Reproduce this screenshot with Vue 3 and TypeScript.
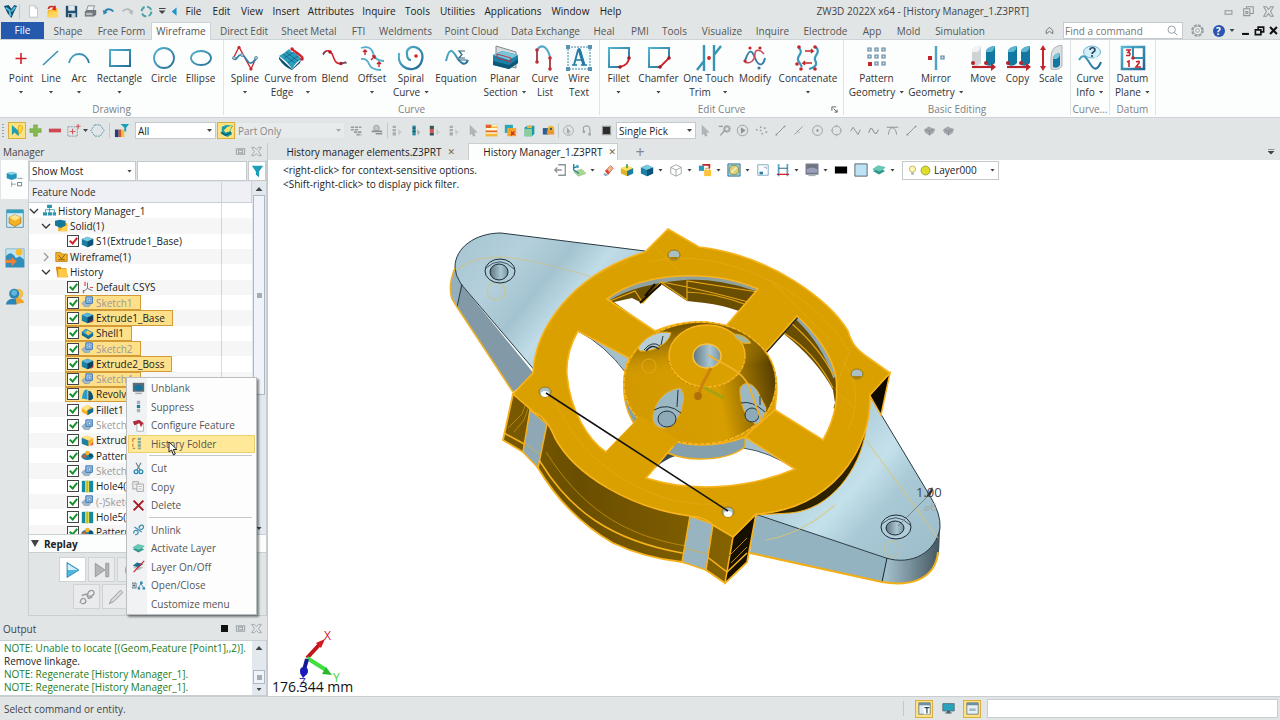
<script setup lang="ts">
import { ref } from 'vue'

interface Tool { icon: string; lines: string[]; w: number; arrow?: boolean; far?: boolean }
interface Group { name: string; w: number; launcher?: boolean; tools: Tool[] }
interface Node { text: string; icon: string; level: number; open?: boolean; fold?: boolean; check?: string; picked?: boolean; dim?: boolean }

const cubeArt = '<path d="M1 5 8 2l7 3v7l-7 3-7-3z" fill="#1b7fa6"/><path d="M1 5 8 2l7 3-7 3z" fill="#7cc8e0"/><path d="M8 8v7l7-3V5z" fill="#0c5579"/>'
const sketchArt = '<path d="M1 9 6 5l7 3-3 5-6 0z" fill="#9db8c9" stroke="#7d9bb0" stroke-width=".8"/><path d="M6 1h8v8H6z" fill="#9cc0e6" stroke="#3b76b5" stroke-width="1.2"/><path d="M9 4h3v3H9z" fill="#eef5fc" stroke="#3b76b5" stroke-width=".8"/>'
const layerArt = '<path d="m1 9 7-3 7 3-7 4z" fill="#2f9489"/><path d="m1 7 6-4 8 2-6 5z" fill="#66cbb7" stroke="#3aa596" stroke-width=".6"/>'
const bluCyl = (x: number, a: string, b: string) => `<path d="M${x} 7q0-5 9-6v17q-3 4-9 2z" fill="${a}"/><path d="M${x} 7q0-5 9-6-1 5-4 6z" fill="${b}"/>`

const art: Record<string, string> = {
  cube: cubeArt,
  sketch: sketchArt,
  layer: layerArt,
  logo: '<path d="M1 2 6 1l3 4 3-4 3 1-3 6-3 7-4-5z" fill="#174a6d"/><path d="m3 4 4 3 1 6M13 3l-4 5" stroke="#4fc2de" stroke-width="2" fill="none"/>',
  page: '<path d="M3 1h7l3 3v11H3z" fill="#fff" stroke="#b4bcc0"/><path d="M10 1v3h3" fill="#dde3e6" stroke="#b4bcc0"/>',
  open: '<path d="M2 6h5l1-2h6v11H2z" fill="#ffb62e"/><path d="M4 8h12l-3 7H2z" fill="#ffd65c"/><path d="M3 5c0-4 6-4 8-1V1M11 5H8" stroke="#d3261b" stroke-width="2" fill="none"/>',
  save: '<path d="M1 1h14v14H1z" fill="#24506e"/><path d="M4 1h8v6H4z" fill="#dfe9ee"/><path d="M4 10h9v5H4z" fill="#bfd3dc"/><path d="M5 11h3v4H5z" fill="#17394f"/>',
  print: '<path d="m5 1 8 0-2 6H3z" fill="#eceff1" stroke="#7a8286"/><path d="m1 8 3-2h11v6l-3 2H1z" fill="#6c767b"/><path d="M2 9h9v4H2z" fill="#b6bdc0" stroke="#777"/>',
  undo: '<path d="M3 9c2-5 8-5 11-1" stroke="#2c85b3" stroke-width="2.4" fill="none"/><path d="m1 6 1 6 5-3z" fill="#2c85b3"/>',
  redo: '<path d="M13 9C11 4 5 4 2 8" stroke="#b2babd" stroke-width="2.2" fill="none"/><path d="m15 6-1 6-5-3z" fill="#b2babd"/>',
  cycle: '<circle cx="8" cy="8" r="6" fill="none" stroke="#4fa3a9" stroke-width="2.4" stroke-dasharray="6.4 3"/>',
  left: '<path d="M11 2v12L4 8z" fill="#1f93cc"/>',
  gear: '<circle cx="8" cy="8" r="5.5" fill="none" stroke="#989fa3" stroke-width="2.4" stroke-dasharray="3 1.3"/><circle cx="8" cy="8" r="4.5" fill="#eef0f1" stroke="#989fa3"/><circle cx="8" cy="8" r="2" fill="none" stroke="#989fa3"/>',
  search: '<circle cx="7" cy="7" r="4.5" fill="none" stroke="#8c9499" stroke-width="1.1"/><path d="m10 10 4 4" stroke="#8c9499" stroke-width="1.2"/>',
  up: '<path d="M4 12V8l4-4 4 4v4l-4-3z" fill="none" stroke="#6b7377" stroke-width="1.2"/>',
  // ribbon
  point: '<path d="M13 8v11M7.500 13.500h11" stroke="#cf2027" stroke-width="1.6"/>',
  line: '<path d="M5 20 20 6" stroke="url(#teal)" stroke-width="1.6"/>',
  arc: '<path d="M3 18C6 6 20 6 23 18" stroke="url(#teal)" stroke-width="1.8" fill="none"/>',
  rectangle: '<path d="M3 5h20v16H3z" fill="none" stroke="url(#teal)" stroke-width="2"/>',
  circle: '<circle cx="13" cy="13" r="10" fill="none" stroke="url(#teal)" stroke-width="1.800"/>',
  ellipse: '<ellipse cx="13" cy="13" rx="10" ry="7" fill="none" stroke="url(#teal)" stroke-width="1.800"/>',
  spline: '<path d="M1 14 7 2l12 22 5-11" fill="none" stroke="#d2232a" stroke-width="1.3"/><path d="M1 13c4 5 4-5 9-3s5 9 9 8 3-3 6-6" fill="none" stroke="#2a7fa8" stroke-width="1.8"/><g fill="#c3252b"><circle cx="7" cy="2.500" r="1.600"/><circle cx="19" cy="24" r="1.600"/></g><g fill="#9fc4d6" stroke="#4d7f99" stroke-width=".6"><circle cx="2" cy="13" r="1.600"/><circle cx="10" cy="10" r="1.600"/><circle cx="24" cy="13" r="1.600"/></g>',
  curveedge: '<path d="m1 12 13 12 9-9-1 3-8 7Q6 22 1 14z" fill="#0d4f70"/><path d="M1 11Q7 8 11 4l3 3q4 0 10 8-5 0-10 9-4-7-13-13z" fill="#2b9cbd"/><path d="m5 9 12 9M8 7l12 9M6 13 16 7M10 18l10-7" stroke="#0d5b7d" stroke-width=".7"/><path d="M14 4c3 3 6 4 11 9" stroke="#d2232a" stroke-width="2.400" fill="none"/><circle cx="14" cy="4" r="1.700" fill="#d2232a"/><circle cx="24" cy="14" r="1.800" fill="#d2232a"/>',
  blend: '<path d="M1 9C4 4 9 5 11 11s4 10 13 6" fill="none" stroke="#d2232a" stroke-width="1.600"/><circle cx="8" cy="7" r="1.700" fill="#a51d24"/><circle cx="19" cy="18.500" r="1.700" fill="#a51d24"/><path d="M1 10 4 6M19 18h6" stroke="#3e5f77" stroke-width="1.200"/>',
  offset: '<path d="M2 3q10-3 12 5t11 8M2 14q6-1 8 5t12 6" fill="none" stroke="#54aecb" stroke-width="1.800"/><path d="M6 10V5M4 7l2-2 2 2M20 22v-5m-2 2 2-2 2 2M12 15l4-4m-3 0h3v3" stroke="#c3252b" stroke-width="1.400" fill="none"/>',
  spiral: '<path d="M1 8C-1 20 8 25 15 24c10-2 12-15 6-20-7-5-13 0-12 5 0 5 2 6 4 6" fill="none" stroke="url(#teal)" stroke-width="2.200"/><circle cx="18" cy="11" r="1.800" fill="#d2232a"/>',
  equation: '<path d="M3 16C6 3 9 4 13 11s9 11 12 4" fill="none" stroke="url(#teal)" stroke-width="2"/><path d="M22 6h-6l3 3.500-3 3.500h6m-7 2h9" stroke="#31667f" fill="none" stroke-width="1.200"/>',
  planar: '<path d="m4 1 20 6v16L4 18z" fill="#d6dbde" stroke="#7f8990"/><path d="m1 10 9-4 16 4v8l-9 6-16-4z" fill="#1982a8"/><path d="m1 10 9-4 16 4-9 5z" fill="#7ac4da"/><path d="m1 16 16 4 9-6v4l-9 6-16-4z" fill="#0d5877"/><path d="m5 9 14 4v4L5 13z" fill="none" stroke="#b63549"/>',
  curvelist: '<path d="M5 16V5C9-1 15 0 18 12v12" fill="none" stroke="#54a9cb" stroke-width="2"/><path d="M5 6v11M18 13v11" stroke="#c52b33" stroke-width="1.500"/><g fill="#c52b33"><circle cx="5" cy="5" r="1.800"/><circle cx="5" cy="17" r="1.800"/><circle cx="18" cy="13" r="1.800"/><circle cx="18" cy="24" r="1.800"/></g>',
  wiretext: '<path d="M2 2h22v22H2z" fill="#f3fafd" stroke="#4b87a4" stroke-dasharray="2 1"/><path d="m12 5-4 15m4-15 1-1 1 1 4 15" stroke="#2578a2" stroke-width="1.800" fill="none"/><path d="m13 4 5 16" stroke="#2578a2" stroke-width="3"/><path d="M9 15h7M6 20h5m4 0h6" stroke="#2578a2" stroke-width="1.500" fill="none"/><g fill="#5793b0"><path d="M0 0h4v4H0zM22 0h4v4h-4zM0 22h4v4H0zM22 22h4v4h-4z"/></g>',
  fillet: '<path d="M23 12V3H3v19h10" fill="none" stroke="url(#teal)" stroke-width="2"/><path d="M23 12q0 8-9 10" stroke="#d2232a" stroke-width="1.800" fill="none"/><circle cx="23" cy="13" r="1.800" fill="#a51d24"/><circle cx="14" cy="22" r="1.800" fill="#a51d24"/>',
  chamfer: '<path d="M23 12V3H3v19h10" fill="none" stroke="url(#teal)" stroke-width="2"/><path d="m23 13-9 9" stroke="#d2232a" stroke-width="1.800" fill="none"/><circle cx="23" cy="13" r="1.800" fill="#a51d24"/><circle cx="14" cy="22" r="1.800" fill="#a51d24"/>',
  trim: '<path d="M8 0v26M18 0v26M1 25l7-9M25 1l-7 9" stroke="#3794b7" stroke-width="2.400"/><circle cx="13" cy="13" r="1.900" fill="#d2232a"/>',
  modify: '<path d="M3 16C7 3 10 5 13 13s8 9 10 0" fill="none" stroke="#347fa8" stroke-width="2"/><path d="M3 17c6 3 10-3 10-8s5-5 9 0" fill="none" stroke="#c74c57" stroke-width="1.500"/><g fill="#c3252b"><circle cx="8" cy="3" r="1.600"/><circle cx="18" cy="3" r="1.600"/><circle cx="3" cy="16" r="1.600"/></g><circle cx="17" cy="23" r="1.600" fill="#347fa8"/>',
  concat: '<path d="M3 2c8 7-4 9 1 15l3 5M21 2c6 7-5 9 0 15 1 4-3 6-7 7" fill="none" stroke="#3c98bb" stroke-width="2.200"/><path d="M10 6h8l-2-2m2 2-2 2M17 18H8l2-2m-2 2 2 2" fill="none" stroke="#c3252b" stroke-width="1.400"/><g fill="#c3252b"><circle cx="4" cy="2" r="1.800"/><circle cx="20" cy="2" r="1.800"/><circle cx="2" cy="19" r="1.800"/><circle cx="6" cy="24" r="1.800"/><circle cx="20" cy="24" r="1.800"/></g>',
  pattern: '<g fill="#d9e7ee" stroke="#5f87a0" stroke-width="1.200"><path d="M4 3h3v3H4zM11 3h3v3h-3zM18 3h3v3h-3zM4 10h3v3H4zM11 10h3v3h-3zM18 10h3v3h-3zM11 17h3v3h-3zM18 17h3v3h-3z"/></g><path d="M4 17h4v4H4z" fill="#c3252b"/>',
  mirror: '<path d="M13 1v24" stroke="#4ea4c4" stroke-width="2.400"/><path d="M5 11h4v4H5z" fill="#c3252b"/><path d="M18 11h3v3h-3z" fill="#d9e7ee" stroke="#5f87a0" stroke-width="1.200"/>',
  move: bluCyl(2, '#cfd3d6', '#f1f2f3') + bluCyl(16, '#1278a1', '#5fb6d0') + '<path d="M2 22h22" stroke="#b8242b" stroke-width="2.200"/><path d="m21 18 5 4-5 4z" fill="#b8242b"/><circle cx="3" cy="18" r="2" fill="#b8242b"/><circle cx="16" cy="18" r="2" fill="#b8242b"/>',
  copy3d: bluCyl(3, '#1278a1', '#5fb6d0') + bluCyl(16, '#1278a1', '#5fb6d0') + '<path d="M2 22h22" stroke="#b8242b" stroke-width="2.200"/><path d="m21 18 5 4-5 4z" fill="#b8242b"/><circle cx="3" cy="18" r="2" fill="#b8242b"/><circle cx="16" cy="18" r="2" fill="#b8242b"/>',
  scale: '<path d="M5 3v20" stroke="#c3252b" stroke-width="2"/><path d="m5 0 3 5H2zM5 26l3-5H2z" fill="#c3252b"/><path d="M13 12Q13 1 24 0v21q-3 5-11 3z" fill="#dce0e2" stroke="#aeb4b8"/><path d="M15 14q0-5 7-6v12q-2 4-7 2z" fill="#1278a1"/><path d="M15 14q0-5 7-6 0 5-4 6z" fill="#7cc6da"/>',
  info: '<ellipse cx="15" cy="7" rx="8.500" ry="6" fill="#d5effa" stroke="#6bb3d2"/><path d="m17 12 4 4-1-5" fill="#d5effa"/><path d="M2 15c4-7 7-3 10 2s7 12 12 0" fill="none" stroke="url(#teal)" stroke-width="2"/><path d="M13 5c0-3 5-3 5 0 0 2-3 2-3 4m0 1v2" stroke="#24465f" stroke-width="1.600" fill="none"/>',
  datum: '<path d="M2 2h22v22H2z" fill="#fff" stroke="url(#teal)" stroke-width="2.600"/><path d="M13 2v11h11" fill="none" stroke="#2f8fb5" stroke-width="2"/><path d="m6 5 4 0-2 2.500q3 0 1.500 3H6M7 17l2-1v6M16 17q4-2 3 1l-3 4h5" fill="none" stroke="#c3252b" stroke-width="1.600"/><circle cx="13" cy="13" r="1.800" fill="#c3252b"/>',
  // selection bar
  pick: '<path d="M2 2v11l3-3 4 4 1-5z" fill="#1f9fb5"/><path d="M9 3c4-2 5 2 4 4l-2 4H9z" fill="#ffd83b" stroke="#cc9a12" stroke-width=".7"/>',
  plus: '<path d="M6 2h4v4h4v4h-4v4H6v-4H2V6h4z" fill="#86b94f" stroke="#6d9f3c" stroke-width=".6"/>',
  minus: '<path d="M2 6h13v4H2z" fill="#cf4a50"/>',
  boxpick: '<path d="M2 4h10v10H2z" fill="none" stroke="#7f97a1" stroke-dasharray="2 1"/><path d="M7 6v6M4 9h6M13 1v5M10.500 3.500h5" stroke="#cf5a60" stroke-width="1.200"/>',
  hex: '<path d="m5 2h6l4 6-4 6H5L1 8z" fill="none" stroke="#4c8fa3" stroke-dasharray="2 1"/>',
  filterset: '<path d="M1 7h4v8H1z" fill="#233f7a"/><path d="M5 7h3v8H5z" fill="#df4b35"/><path d="M8 7h3v8H8z" fill="#efc23d"/><path d="M7 1h9l-3 4v4h-2V5z" fill="#1aa0b7"/>',
  part: '<path d="m3 4 5-2 7 1-3 5 2 4-5 3-6-3z" fill="#169db2"/><path d="m5 8 4-4 5-1-3 6-4 1z" fill="#ffe15c"/><path d="m2 10 5 3 6-3" stroke="#0a6372" stroke-width="1.500" fill="none"/>',
  gline1: '<path d="M1 4h13M1 7h9M5 10h9M8 13h6" stroke="#959b9f" stroke-width="2" stroke-dasharray="4 1"/>',
  gline2: '<circle cx="8" cy="5" r="3.500" fill="#c2c6c8" stroke="#92989b"/><path d="M2 9h13M7 12h8" stroke="#8c9296" stroke-width="2"/>',
  list1: '<path d="M2 2h4v3H2zM2 6h4v3H2zM2 10h4v4H2z" fill="#a5abae"/><path d="m9 6 5 5-3 0v3l-2-2z" fill="#c6cacc"/>',
  list2: '<path d="M3 2h4v12H3z" fill="#218a9c"/><path d="M3 5h4M3 9h4" stroke="#27414d"/><path d="m9 6 4 5-2 0v3l-2-2z" fill="#aab0b3"/>',
  list3: '<path d="M1 2h5v4H1zM1 11h5v3H1z" fill="#35545f"/><path d="M1 6h5v5H1z" fill="#cf5450"/><path d="m9 6 5 5-3 0v3l-2-2z" fill="#c6cacc"/>',
  ptr: '<path d="m4 2 8 8H8l2 4-2 1-2-4-2 2z" fill="#b3b8bb" stroke="#8b9194" stroke-width=".6"/>',
  rows: '<path d="M1 1h14v14H1z" fill="#fff8d4" stroke="#d8c78c" stroke-width=".6"/><path d="M1 1h7v4H1zM1 8h14v2H1z" fill="#e2622a"/><path d="M8 3h7v2H8zM1 12h14v3H1z" fill="#f2b83a"/>',
  fold1: '<path d="M1 1h10v10H1z" fill="#2aa7b9"/><path d="M4 5h11v10H4z" fill="#f9a52c"/><path d="m8 7 2 3 4-2-2 3 2 3-3-1-3 2 1-4z" fill="#c9302a"/>',
  fold2: '<path d="m2 4 4-2h8v10l-3 3H2z" fill="#1c9aac"/><path d="M2 6h9v9H2z" fill="#8dcf9b"/><path d="M5 2h6v3H5z" fill="#f0b43c"/>',
  fold3: '<path d="M1 5h7v8H1z" fill="#2a5f93"/><circle cx="11" cy="6" r="4" fill="#f3b532"/><path d="M6 8h9v5H6z" fill="#ef9430"/><circle cx="11" cy="6" r="1.500" fill="#3d5670"/>',
  gcirc: '<circle cx="8" cy="8" r="6" fill="none" stroke="#9aa0a3"/><path d="m6 4 5 6H8l1 3-3-2z" fill="#a3a8ab"/>',
  gcurve: '<path d="M3 9V4c3-3 8-2 8 3v7" fill="none" stroke="#9aa0a3" stroke-width="1.300"/><path d="M2 8h3v3H2zM9 11h3v3H9z" fill="#a3a8ab"/>',
  square: '<path d="M3 3h10v10H3z" fill="#2b2b2b" stroke="#9a9a9a" stroke-width="1.500"/>',
  ggear: '<circle cx="11" cy="6" r="4" fill="#b5babd" stroke="#92989b"/><circle cx="11" cy="6" r="1.500" fill="#e1e5e6"/><path d="M1 3h5M3 14l5-6" stroke="#92989b" stroke-width="1.500"/>',
  gplay: '<circle cx="8" cy="8" r="6.500" fill="none" stroke="#8d9396"/><path d="m6 4 6 4-6 4z" fill="#8d9396"/>',
  gdots: '<g fill="#9aa0a3"><path d="M1 6h2v2H1zM6 3h2v2H6zM6 7h2v2H6zM11 4h2v2h-2zM8 11h2v2H8zM13 9h2v2h-2z"/></g>',
  gslash: '<path d="M3 13 13 3" stroke="#8d9396" stroke-width="1.200"/><path d="M2 12h2v2H2zM12 2h2v2h-2z" fill="#8d9396"/>',
  gslash2: '<path d="M3 13 13 3M6 8l3 3" stroke="#9aa0a3" stroke-width="1.200"/>',
  gdot: '<circle cx="8" cy="8" r="6" fill="none" stroke="#8d9396"/><circle cx="8" cy="8" r="1.500" fill="#8d9396"/>',
  gring: '<circle cx="8" cy="8" r="5.500" fill="none" stroke="#8d9396"/><path d="M7 1h2v3H7zM7 12h2v3H7zM1 7h3v2H1zM12 7h3v2h-3z" fill="#b5babd"/>',
  gzig: '<path d="M2 9 5 4l6 9 3-6" fill="none" stroke="#8d9396" stroke-width="1.200"/>',
  gwave: '<path d="M2 11c3-9 4-6 6-2s4 4 6-2" fill="none" stroke="#8d9396" stroke-width="1.300"/>',
  garch: '<path d="M1 4h14M3 13c1-11 9-11 10 0" fill="none" stroke="#8d9396" stroke-width="1.200"/>',
  gcube: '<path d="m1 7 6-4 4 2 4 1-2 5-5 3-5-3z" fill="#a1a7aa"/><path d="m3 7 5 2 5-2M8 9v5" stroke="#868c8f" fill="none"/>',
  // side strip
  sideTree: '<path d="M2 4l6-2 6 2v6l-6 2-6-2z" fill="#2495bb"/><path d="M2 4l6-2 6 2-6 2z" fill="#8dd2e6"/><path d="M8 14v6m0-3h5M15 10h6" stroke="#858e93" fill="none"/><path d="M15 15h5v4h-5z" fill="none" stroke="#5c6f7b"/>',
  sideBox: '<path d="M2 1h20v21H2z" fill="#d3eaf3" stroke="#4f8aa6"/><path d="M2 1h20v4H2z" fill="#35a0c0"/><path d="m5 10 7-3 7 3v7l-7 4-7-4z" fill="#f4b223" stroke="#a0690e" stroke-width=".8"/><path d="m5 10 7 4 7-4-7-3z" fill="#ffe28a"/>',
  sideView: '<path d="M1 1h22v22H1z" fill="#bfe3f1" stroke="#7fb2c8"/><path d="M1 10q6-8 12 2l5-2 5 4v9H1z" fill="#318ebb"/><circle cx="17" cy="5" r="4" fill="#fbbc29"/><path d="M1 14h7v-3l6 5-6 6v-4H1z" fill="#ee8038"/>',
  sideUser: '<circle cx="16" cy="8" r="6" fill="#f5bd4c"/><path d="M10 21q-1-7 5-8 7 1 8 6z" fill="#f3a42c"/><circle cx="11" cy="8" r="6" fill="#2e86b5"/><circle cx="11" cy="7" r="3.500" fill="#5fb6da"/><path d="M1 21q1-6 7-7h5l1 7z" fill="#2e86b5"/>',
  funnel: '<path d="M1 1h14l-5 7v7l-4-3V8z" fill="#1c9ebb"/>',
  // tree
  hierarchy: '<path d="M5 1h6v4H5zM0 10h5v4H0zM6 10h5v4H6zM12 10h4v4h-4z" fill="#2a94b0"/><path d="M8 5v5M3 10V7h11v3" stroke="#2a94b0" fill="none"/>',
  folderSolid: '<path d="M4 5h11v10H4z" fill="#f4a91f"/><path d="M0 2l6-1 7 1v6l-6 3-7-3z" fill="#13789a"/><path d="m10 10 6-3-2 8H5z" fill="#ffd35a"/>',
  folderWire: '<path d="M1 3h6l1 2h7v9H1z" fill="#f4b223" stroke="#b97b10"/><path d="m4 6 4 5 4-5M4 12h8" stroke="#8a5a1a" fill="none" stroke-width="1.200"/>',
  folder: '<path d="M1 2h6l1 2h6v4l2 7H3z" fill="#e08a16"/><path d="M4 5h11v10H4z" fill="#ffcb45"/>',
  csys: '<path d="M8 2v7l6 3M8 9l-5 4" stroke="#68747a" stroke-width="1.200" fill="none"/><path d="M5 1v5M11 8h4M3 11v4" stroke="#d65058" stroke-width="1.500"/>',
  extrude: '<path d="M1 5 8 2l7 3v7l-7 3-7-3z" fill="#1b7fa6"/><path d="M1 5 8 2l7 3-7 3z" fill="#5cb4d6"/><path d="M8 8v7l7-3V5z" fill="#123f5c"/><path d="m11 15 4-2v-3" fill="#d5343a"/>',
  shell: '<path d="m1 6 5-4 9 5v4l-6 4-8-5z" fill="#166d92"/><path d="m1 6 5-4 9 5-6 4z" fill="#3fa4c6"/><path d="m5 7 3-3 5 3-4 3z" fill="#f0c24a"/>',
  revolve: '<path d="M1 13q1-8 4-11h3v12z" fill="#2b9cc4"/><path d="M9 15V3q6 2 6 10l-3 2z" fill="#0d4f78"/>',
  filletT: '<path d="M1 6 8 2l7 4v5l-7 4-7-4z" fill="#f4b223"/><path d="m1 6 7-4 4 2-5 6z" fill="#ffe48c"/><path d="M8 9v6l7-4V6z" fill="#176b91"/>',
  extrudeY: '<path d="M1 4 8 2l7 3v7l-6 3-8-3z" fill="#f2b530"/><path d="m1 4 7-2 7 3-6 3z" fill="#ffe28a"/><path d="M1 5v7l8 3V8z" fill="#1b7fa6"/><path d="m11 15 4-2v-3z" fill="#d5343a"/>',
  patternT: '<ellipse cx="8" cy="9" rx="7.500" ry="4.500" fill="#1b7fa6"/><circle cx="8" cy="5" r="3" fill="#f2b530"/><circle cx="4" cy="9" r="2.500" fill="#c1622f"/><circle cx="12" cy="8" r="2.500" fill="#0e4f6e"/>',
  hole: '<path d="M1 1h14v14H1z" fill="#158ba0"/><path d="M5 1h5v14H5z" fill="#e7d94b"/><path d="M7 1h1v14H7z" fill="#7b9a48"/>',
  // context menu
  unblank: '<path d="M1 1h14v11H1z" fill="#5d6b75"/><path d="m3 5 5-2 5 2v4l-5 2-5-2z" fill="#15759f"/><path d="M4 13h8v2H4z" fill="#a8b0b5"/>',
  suppress: '<path d="M6 1h4v4H6zM6 11h4v4H6z" fill="#9fb3bd"/><path d="M6 6h4v4H6z" fill="#1e7f98"/>',
  configure: '<path d="M6 5h8v10H6z" fill="#fff" stroke="#9aa"/><path d="M1 3 9 1l5 4-3 5-2-5-6 3z" fill="#b02a3c"/>',
  histFolder: '<path d="M1 2h3M1 2v12h3" stroke="#d47f3c" fill="none" stroke-width="1.500" stroke-dasharray="4 2"/><path d="M7 1h4v3H7zM7 5h4v3H7zM7 9h4v3H7zM7 13h4v2H7z" fill="#83a79c"/>',
  cut: '<path d="m5 1 5 9M11 1 6 10" stroke="#6c8796" stroke-width="1.500"/><circle cx="5" cy="12" r="2.300" fill="none" stroke="#1f88b5" stroke-width="1.600"/><circle cx="11" cy="12" r="2.300" fill="none" stroke="#1f88b5" stroke-width="1.600"/>',
  copy: '<path d="M1 2h7v9H1z" fill="#eee" stroke="#999"/><path d="M6 5h8v9H6z" fill="#f6f6f6" stroke="#999"/><path d="M8 8h4M8 11h4M3 5h3" stroke="#aaa"/>',
  del: '<path d="m2 2 12 12M14 2 2 14" stroke="#a61b25" stroke-width="2.400"/>',
  unlink: '<path d="M2 13c0-4 3-5 5-3s-1 5-3 4M9 7c-1-4 4-6 5-3s-3 5-4 3M3 5l9 6" fill="none" stroke="#3a8cb0" stroke-width="1.500"/>',
  layerOff: '<path d="m1 9 6-2 7 2-6 4z" fill="#b8c4ca"/><path d="m1 7 5-4 8 2-6 4z" fill="#1a6f93"/><path d="M2 15 15 1" stroke="#d2232a" stroke-width="1.500"/>',
  openClose: '<path d="M0 5h5v6H0z" fill="#fff" stroke="#456"/><path d="M1 8h3M2.500 6v4" stroke="#456"/><path d="M10 3h3v3h-3zM7 10h3v3H7zM13 10h3v3h-3z" fill="#238aaa"/><path d="m8 10 3-4 3 4" stroke="#238aaa" fill="none"/>',
  // replay
  play: '<path d="m4 2 16 10L4 22z" fill="#4cb8df" stroke="#1e7aa6"/><path d="m5 4 13 8H5z" fill="#d2eefa"/>',
  next: '<path d="m3 3 13 9-13 9z" fill="#b3b6b8" stroke="#8a8e90"/><path d="M17 3h4v18h-4z" fill="#b3b6b8" stroke="#8a8e90"/>',
  loop: '<path d="M18 6A8 8 0 1 0 18 18" fill="none" stroke="#a6aaac" stroke-width="2"/>',
  chain: '<path d="M3 20c0-6 5-8 7-4s-3 6-6 4M13 10c-1-6 6-9 8-5s-5 8-7 5M5 10l6-2 3 6 5-2" fill="none" stroke="#999da0" stroke-width="1.800"/>',
  pencil: '<path d="m3 21 3-6L18 3l3 3L9 18z" fill="#d7dadb" stroke="#95999b" stroke-width="1.300"/>',
  // viewport bar
  exit: '<path d="M6 2h8v12H6" fill="none" stroke="#8d9396" stroke-width="1.500"/><path d="M10 8H2m3-3L2 8l3 3" fill="none" stroke="#8d9396" stroke-width="1.500"/>',
  plane: '<path d="m2 10 9-3 5 5-9 3z" fill="#a8d98f" stroke="#7bb56f" stroke-width=".6"/><path d="M2 1v7l6 4M1 5h6" stroke="#2f7fa2" stroke-width="1.600" fill="none"/><circle cx="6" cy="4" r="2" fill="#58a7c6"/>',
  eraser: '<path d="m4 11 4 3-3 1-2-2z" fill="#8aa7c4"/><path d="m5 9 6-6 3 3-6 7z" fill="#f1b88c" stroke="#cc6a4c"/><path d="m5 9 2-2 3 4-2 2z" fill="#d5403a"/>',
  yellowbox: '<path d="m1 6 7-3 7 3v6l-7 3-7-3z" fill="#e0b52c"/><path d="m1 6 7-3 7 3-7 3z" fill="#ffe35b"/><path d="M8 9v6l7-3V6z" fill="#1c7fa8"/><path d="M8 1v5" stroke="#2b8b48" stroke-width="1.600"/>',
  wirebox: '<path d="m2 5 6-3 6 3v7l-6 3-6-3zm0 0 6 3 6-3M8 8v7" fill="none" stroke="#9aa1a5"/>',
  lockbox: '<path d="M1 3h6v6H1z" fill="#2a9cba"/><path d="M5 2h8v4" stroke="#c3252b" stroke-width="2" fill="none"/><path d="M7 8h8v7H7z" fill="#ffc33c"/><path d="M9 8V6h4v2" stroke="#c98e17" fill="none"/>',
  target: '<path d="M1 1h14v14H1z" fill="#8fcbe2" stroke="#39718c"/><circle cx="8" cy="8" r="5.500" fill="#d9cf7c" stroke="#8f8a3b"/><path d="m5 11 6-6" stroke="#f4f0b8" stroke-width="2"/>',
  frame: '<path d="M2 2h12v12H2z" fill="#f7fbfd" stroke="#7ba7bb"/><path d="M4 10h4v3H4z" fill="#2e7aa2"/><path d="M9 5h3v2" stroke="#aac" fill="none"/>',
  section: '<path d="M3 1v14M13 1v14" stroke="#54a9cb" stroke-width="2"/><path d="M3 6h10" stroke="#27506b"/><path d="M1 13h14" stroke="#d2232a" stroke-width="1.500"/>',
  display: '<path d="M1 1h14v12H1z" fill="#6d7482" stroke="#8f969b"/><path d="M2 7q6-4 12 0v4H2z" fill="#9b9fbb"/><path d="M4 13h8v2H4z" fill="#a9afb3"/>',
  black: '<path d="M1 4h14v8H1z" fill="#000"/>',
  blue: '<path d="M1 1h14v14H1z" fill="#bde2f4" stroke="#4b5a62"/>',
  bulb: '<circle cx="8" cy="6" r="4.500" fill="#fff7b0" stroke="#a8a04a"/><path d="M6 11h4v3H6z" fill="#a6acb0"/>',
  dotY: '<circle cx="8" cy="8" r="6.500" fill="#e0dc2b" stroke="#7e8d1d"/>',
  statT: '<path d="M1 1h14v14H1z" fill="#dfe9f0" stroke="#61747f"/><path d="M1 1h14v3H1z" fill="#6d8fa6"/><path d="M7 5h7v10H7z" fill="#fff"/><path d="M8 7h6m-3 0v7" stroke="#2b4657" stroke-width="1.500"/>',
  statScreen: '<path d="M1 2h14v9H1z" fill="#2ba3bd" stroke="#4c6670"/><path d="M6 11h4v2H6zM4 13h8v1H4z" fill="#44606b"/>',
  statList: '<path d="M1 1h14v14H1z" fill="#e6eff5" stroke="#61747f"/><path d="M1 1h14v3H1z" fill="#6d8fa6"/><path d="M4 8h8v3H4z" fill="#9fb4c4"/>'
}

const menus = [
  { t: 'File', w: 27 }, { t: 'Edit', w: 29 }, { t: 'View', w: 32 }, { t: 'Insert', w: 36 }, { t: 'Attributes', w: 54 },
  { t: 'Inquire', w: 42 }, { t: 'Tools', w: 35 }, { t: 'Utilities', w: 45 }, { t: 'Applications', w: 66 }, { t: 'Window', w: 49 }, { t: 'Help', w: 31 }
]
const tabs = [
  { t: 'File', w: 43 }, { t: 'Shape', w: 48 }, { t: 'Free Form', w: 59 }, { t: 'Wireframe', w: 60 }, { t: 'Direct Edit', w: 66 },
  { t: 'Sheet Metal', w: 64 }, { t: 'FTI', w: 35 }, { t: 'Weldments', w: 59 }, { t: 'Point Cloud', w: 73 }, { t: 'Data Exchange', w: 75 },
  { t: 'Heal', w: 42 }, { t: 'PMI', w: 30 }, { t: 'Tools', w: 39 }, { t: 'Visualize', w: 56 }, { t: 'Inquire', w: 45 },
  { t: 'Electrode', w: 61 }, { t: 'App', w: 32 }, { t: 'Mold', w: 41 }, { t: 'Simulation', w: 62 }
]
const activeTab = ref('Wireframe')

const groups: Group[] = [
  { name: 'Drawing', w: 224, tools: [
    { icon: 'point', lines: ['Point'], w: 33, arrow: true }, { icon: 'line', lines: ['Line'], w: 27, arrow: true },
    { icon: 'arc', lines: ['Arc'], w: 29, arrow: true }, { icon: 'rectangle', lines: ['Rectangle'], w: 52, arrow: true },
    { icon: 'circle', lines: ['Circle'], w: 37 }, { icon: 'ellipse', lines: ['Ellipse'], w: 36 }] },
  { name: 'Curve', w: 376, tools: [
    { icon: 'spline', lines: ['Spline'], w: 32, arrow: true }, { icon: 'curveedge', lines: ['Curve from', 'Edge'], w: 59, arrow: true, far: true },
    { icon: 'blend', lines: ['Blend'], w: 30 }, { icon: 'offset', lines: ['Offset'], w: 44, arrow: true },
    { icon: 'spiral', lines: ['Spiral', 'Curve'], w: 34, arrow: true }, { icon: 'equation', lines: ['Equation'], w: 56 },
    { icon: 'planar', lines: ['Planar', 'Section'], w: 42, arrow: true }, { icon: 'curvelist', lines: ['Curve', 'List'], w: 38 },
    { icon: 'wiretext', lines: ['Wire', 'Text'], w: 30 }] },
  { name: 'Edit Curve', w: 244, launcher: true, tools: [
    { icon: 'fillet', lines: ['Fillet'], w: 30, arrow: true }, { icon: 'chamfer', lines: ['Chamfer'], w: 50, arrow: true },
    { icon: 'trim', lines: ['One Touch', 'Trim'], w: 50, arrow: true, far: true }, { icon: 'modify', lines: ['Modify'], w: 43 },
    { icon: 'concat', lines: ['Concatenate'], w: 63, arrow: true }] },
  { name: 'Basic Editing', w: 227, tools: [
    { icon: 'pattern', lines: ['Pattern', 'Geometry'], w: 58, arrow: true }, { icon: 'mirror', lines: ['Mirror', 'Geometry'], w: 61, arrow: true },
    { icon: 'move', lines: ['Move'], w: 33 }, { icon: 'copy3d', lines: ['Copy'], w: 36 }, { icon: 'scale', lines: ['Scale'], w: 31 }] },
  { name: 'Curve...', w: 39, tools: [{ icon: 'info', lines: ['Curve', 'Info'], w: 38, arrow: true }] },
  { name: 'Datum', w: 46, tools: [{ icon: 'datum', lines: ['Datum', 'Plane'], w: 44, arrow: true }] }
]

const quick = ['page', 'open', 'save', 'print', 'undo', 'redo', 'cycle']
const listTools = ['list1', 'list2', 'list3', 'list1', 'ptr', 'rows', 'fold1', 'fold2', 'fold3']
const pickTools = ['ptr', 'ggear', 'gplay', 'gdots', 'gslash', 'gslash2', 'gdot', 'gring', 'gzig', 'gwave', 'garch', 'gslash', 'gcube', 'gcube']
const sideTabs = [
  { icon: 'sideTree', name: 'History' }, { icon: 'sideBox', name: 'Assembly' }, { icon: 'sideView', name: 'Visual' }, { icon: 'sideUser', name: 'Roles' }
]

const nodes: Node[] = [
  { text: 'History Manager_1', icon: 'hierarchy', level: 0, fold: true, open: true },
  { text: 'Solid(1)', icon: 'folderSolid', level: 1, fold: true, open: true },
  { text: 'S1(Extrude1_Base)', icon: 'cube', level: 2, check: 'red' },
  { text: 'Wireframe(1)', icon: 'folderWire', level: 1, fold: true },
  { text: 'History', icon: 'folder', level: 1, fold: true, open: true },
  { text: 'Default CSYS', icon: 'csys', level: 2, check: 'green' },
  { text: 'Sketch1', icon: 'sketch', level: 2, check: 'green', picked: true, dim: true },
  { text: 'Extrude1_Base', icon: 'extrude', level: 2, check: 'green', picked: true },
  { text: 'Shell1', icon: 'shell', level: 2, check: 'green', picked: true },
  { text: 'Sketch2', icon: 'sketch', level: 2, check: 'green', picked: true, dim: true },
  { text: 'Extrude2_Boss', icon: 'extrude', level: 2, check: 'green', picked: true },
  { text: 'Sketch4', icon: 'sketch', level: 2, check: 'green', picked: true, dim: true },
  { text: 'Revolve1', icon: 'revolve', level: 2, check: 'green', picked: true },
  { text: 'Fillet1', icon: 'filletT', level: 2, check: 'green' },
  { text: 'Sketch5', icon: 'sketch', level: 2, check: 'green', dim: true },
  { text: 'Extrude3', icon: 'extrudeY', level: 2, check: 'green' },
  { text: 'Pattern1', icon: 'patternT', level: 2, check: 'green' },
  { text: 'Sketch6', icon: 'sketch', level: 2, check: 'green', dim: true },
  { text: 'Hole4(', icon: 'hole', level: 2, check: 'green' },
  { text: '(-)Sketch', icon: 'sketch', level: 2, check: 'green', dim: true },
  { text: 'Hole5(', icon: 'hole', level: 2, check: 'green' },
  { text: 'Pattern2', icon: 'patternT', level: 2, check: 'green' }
]

const context = [
  [{ icon: 'unblank', t: 'Unblank' }, { icon: 'suppress', t: 'Suppress' }, { icon: 'configure', t: 'Configure Feature' }, { icon: 'histFolder', t: 'History Folder' }],
  [{ icon: 'cut', t: 'Cut' }, { icon: 'copy', t: 'Copy' }, { icon: 'del', t: 'Delete' }],
  [{ icon: 'unlink', t: 'Unlink' }, { icon: 'layer', t: 'Activate Layer' }, { icon: 'layerOff', t: 'Layer On/Off' }, { icon: 'openClose', t: 'Open/Close' }, { icon: '', t: 'Customize menu' }]
]

const viewTools = [
  { icon: 'exit', w: 19 }, { icon: 'plane', w: 29, arrow: true }, { icon: 'eraser', w: 19 }, { icon: 'yellowbox', w: 20 },
  { icon: 'cube', w: 29, arrow: true }, { icon: 'wirebox', w: 29, arrow: true }, { icon: 'lockbox', w: 29, arrow: true },
  { icon: 'target', w: 29, arrow: true }, { icon: 'frame', w: 20 }, { icon: 'section', w: 29, arrow: true },
  { icon: 'display', w: 29, arrow: true }, { icon: 'black', w: 20 }, { icon: 'blue', w: 18 }, { icon: 'layer', w: 28, arrow: true }
]

const output = [
  { t: 'NOTE: Unable to locate [(Geom,Feature [Point1],,2)].', note: true },
  { t: 'Remove linkage.', note: false },
  { t: 'NOTE: Regenerate [History Manager_1].', note: true },
  { t: 'NOTE: Regenerate [History Manager_1].', note: true }
]
</script>

<template>
  <div class="app">
    <svg class="defs" aria-hidden="true">
      <defs>
        <linearGradient id="teal" gradientUnits="userSpaceOnUse" x1="0" y1="0" x2="26" y2="26"><stop offset="0" stop-color="#5cc0d8" /><stop offset="1" stop-color="#1c5f8d" /></linearGradient>
      </defs>
    </svg>

    <header class="title">
      <div class="quick">
        <svg class="ic15" viewBox="0 0 16 16" v-html="art.logo"></svg>
        <i class="vsep"></i>
        <button v-for="q in quick" :key="q" :aria-label="q"><svg class="ic13" viewBox="0 0 16 16" v-html="art[q]"></svg></button>
        <button class="tiny" aria-label="Customize"><i class="caret lined"></i></button>
        <button class="tiny" aria-label="Collapse menu"><svg class="ic11" viewBox="0 0 16 16" v-html="art.left"></svg></button>
      </div>
      <nav class="menubar">
        <button v-for="m in menus" :key="m.t" :style="{ width: m.w + 'px' }">{{ m.t }}</button>
      </nav>
      <h1>ZW3D 2022X x64 - [History Manager_1.Z3PRT]</h1>
      <div class="winbtns">
        <button aria-label="Minimize"><svg class="ic11" viewBox="0 0 16 16"><path d="M3 7h10v5H3z" fill="none" stroke="#8f979b" stroke-width="1.500" /></svg></button>
        <button aria-label="Restore"><svg class="ic11" viewBox="0 0 16 16"><path d="M1 4h9v10H1zM5 4V1h10v10h-5M4 8h3v3H4z" fill="none" stroke="#8f979b" stroke-width="1.500" /></svg></button>
        <button aria-label="Close"><svg class="ic11" viewBox="0 0 16 16"><path d="M1 1h4l3 4 3-4h4l-4 7 4 7h-4l-3-4-3 4H1l4-7z" fill="none" stroke="#8f979b" stroke-width="1.500" /></svg></button>
      </div>
    </header>

    <nav class="tabs">
      <button v-for="(t, i) in tabs" :key="i" :class="{ file: i === 0, on: t.t === activeTab }" :style="{ width: t.w + 'px' }" @click="activeTab = t.t">{{ t.t }}</button>
      <div class="tabtools">
        <button aria-label="Minimize ribbon"><svg class="ic13" viewBox="0 0 16 16" v-html="art.up"></svg></button>
        <label class="find"><input type="text" placeholder="Find a command" aria-label="Find a command"><svg class="ic13" viewBox="0 0 16 16" v-html="art.search"></svg></label>
        <button aria-label="Settings"><svg class="ic15" viewBox="0 0 16 16" v-html="art.gear"></svg></button>
        <button class="help" aria-label="Help"><b>?</b><i class="caret"></i></button>
        <button class="mdi" aria-label="Minimize document"><svg class="ic11" viewBox="0 0 16 16"><path d="M3 13h10" stroke="#111" stroke-width="3" /></svg></button>
        <button class="mdi" aria-label="Restore document"><svg class="ic11" viewBox="0 0 16 16"><path d="M2 7h8v7H2zM6 6V3h8v7h-4" fill="none" stroke="#111" stroke-width="2.400" /></svg></button>
        <button class="mdi" aria-label="Close document"><svg class="ic11" viewBox="0 0 16 16"><path d="m3 3 10 10M13 3 3 13" stroke="#111" stroke-width="3" /></svg></button>
      </div>
    </nav>

    <section class="ribbon">
      <div v-for="g in groups" :key="g.name" class="group" :style="{ width: g.w + 'px' }">
        <div class="tools">
          <button v-for="t in g.tools" :key="t.icon" :style="{ width: t.w + 'px' }">
            <svg class="ic26" viewBox="0 0 26 26" v-html="art[t.icon]"></svg>
            <span>{{ t.lines[0] }}</span>
            <span class="second" :class="{ far: t.far }">{{ t.lines[1] }}<i v-if="t.arrow" class="caret"></i></span>
          </button>
        </div>
        <div class="caption">
          <h2>{{ g.name }}</h2>
          <button v-if="g.launcher" aria-label="Curve options"><svg viewBox="0 0 16 16"><path d="M2 11V2h10M6 6l8 8m0-6v6H8" fill="none" stroke="#555" stroke-width="2" /></svg></button>
        </div>
      </div>
    </section>

    <div class="bar">
      <div class="lead">
        <i class="grip"></i>
        <button class="lit" aria-label="Pick"><svg class="ic15" viewBox="0 0 16 16" v-html="art.pick"></svg></button>
        <button aria-label="Add"><svg class="ic15" viewBox="0 0 16 16" v-html="art.plus"></svg></button>
        <button aria-label="Remove"><svg class="ic15" viewBox="0 0 16 16" v-html="art.minus"></svg></button>
        <button aria-label="Box pick"><svg class="ic15" viewBox="0 0 16 16" v-html="art.boxpick"></svg></button>
        <i class="caret"></i>
        <button aria-label="Polygon pick"><svg class="ic15" viewBox="0 0 16 16" v-html="art.hex"></svg></button>
        <i class="vsep"></i>
        <button aria-label="Filter set"><svg class="ic15" viewBox="0 0 16 16" v-html="art.filterset"></svg></button>
      </div>
      <span class="combo all"><select aria-label="Filter"><option>All</option></select></span>
      <button class="lit" aria-label="Scope"><svg class="ic15" viewBox="0 0 16 16" v-html="art.part"></svg></button>
      <span class="combo part"><select aria-label="Pick scope" disabled><option>Part Only</option></select></span>
      <div class="spread pair">
        <button v-for="n in ['gline1', 'gline2']" :key="n" :aria-label="n"><svg class="ic13" viewBox="0 0 16 16" v-html="art[n]"></svg></button>
      </div>
      <i class="vsep"></i>
      <div class="spread nine">
        <button v-for="(n, i) in listTools" :key="i" :aria-label="n"><svg class="ic13" viewBox="0 0 16 16" v-html="art[n]"></svg></button>
      </div>
      <i class="vsep"></i>
      <div class="spread three">
        <button v-for="n in ['gcirc', 'gcurve', 'square']" :key="n" :aria-label="n"><svg class="ic13" viewBox="0 0 16 16" v-html="art[n]"></svg></button>
      </div>
      <span class="combo single"><select aria-label="Pick mode"><option>Single Pick</option></select></span>
      <div class="spread many">
        <button v-for="(n, i) in pickTools" :key="i" :aria-label="n"><svg class="ic13" viewBox="0 0 16 16" v-html="art[n]"></svg></button>
      </div>
    </div>

    <div class="work">
      <aside class="left">
        <div class="phead"><h2>Manager</h2>
          <button aria-label="Pin manager"><svg class="ic11" viewBox="0 0 16 16"><path d="M2 4h12v8H2zM5 6h6v4H5z" fill="none" stroke="#9da4a8" stroke-width="1.500" /></svg></button>
          <button aria-label="Close manager"><svg class="ic11" viewBox="0 0 16 16"><path d="M1 2h4l3 3 3-3h4l-4 6 4 6h-4l-3-3-3 3H1l4-6z" fill="none" stroke="#9da4a8" stroke-width="1.300" /></svg></button>
        </div>
        <div class="manager">
          <nav class="side">
            <button v-for="(s, i) in sideTabs" :key="s.icon" :class="{ on: i === 0 }" :aria-label="s.name"><svg class="ic20" viewBox="0 0 24 24" v-html="art[s.icon]"></svg></button>
          </nav>
          <div class="panel">
            <div class="filters">
              <span class="combo show"><select aria-label="Show"><option>Show Most</option></select></span>
              <input type="text" aria-label="Search features">
              <button aria-label="Filter features"><svg class="ic13" viewBox="0 0 16 16" v-html="art.funnel"></svg></button>
            </div>
            <div class="treebox">
              <div class="treemain">
                <div class="thead"><span>Feature Node</span><span></span></div>
                <div class="clip">
                  <ul class="tree">
                    <li v-for="(n, i) in nodes" :key="i" :class="'lv' + n.level">
                      <label v-if="n.check" :class="{ picked: n.picked, dim: n.dim }">
                        <input type="checkbox" checked :class="n.check">
                        <svg class="ic13" viewBox="0 0 16 16" v-html="art[n.icon]"></svg><span>{{ n.text }}</span>
                      </label>
                      <template v-else>
                        <svg class="chev" viewBox="0 0 10 10"><path :d="n.open ? 'M1 3l4 4 4-4' : 'M3 1l4 4-4 4'" fill="none" :stroke="n.open ? '#333' : '#999'" stroke-width="1.300" /></svg>
                        <svg class="ic13" viewBox="0 0 16 16" v-html="art[n.icon]"></svg><span>{{ n.text }}</span>
                      </template>
                    </li>
                  </ul>
                </div>
              </div>
              <div class="scroll"><i class="caret upc"></i><i class="thumb"></i><i class="caret"></i></div>
            </div>
            <div class="replay"><i class="caret big"></i>Replay</div>
            <div class="steps">
              <div>
                <button class="white" aria-label="Play"><svg class="ic18" viewBox="0 0 24 24" v-html="art.play"></svg></button>
                <button aria-label="Next"><svg class="ic18" viewBox="0 0 24 24" v-html="art.next"></svg></button>
                <button aria-label="Loop"><svg class="ic18" viewBox="0 0 24 24" v-html="art.loop"></svg></button>
              </div>
              <div class="lower">
                <button aria-label="Relink"><svg class="ic18" viewBox="0 0 24 24" v-html="art.chain"></svg></button>
                <button aria-label="Edit"><svg class="ic18" viewBox="0 0 24 24" v-html="art.pencil"></svg></button>
              </div>
            </div>
          </div>
        </div>
        <div class="phead out"><h2>Output</h2>
          <button aria-label="Stop"><i class="stop"></i></button>
          <button aria-label="Pin output"><svg class="ic11" viewBox="0 0 16 16"><path d="M2 4h12v8H2zM5 6h6v4H5z" fill="none" stroke="#9da4a8" stroke-width="1.500" /></svg></button>
          <button aria-label="Close output"><svg class="ic11" viewBox="0 0 16 16"><path d="M1 2h4l3 3 3-3h4l-4 6 4 6h-4l-3-3-3 3H1l4-6z" fill="none" stroke="#9da4a8" stroke-width="1.300" /></svg></button>
        </div>
        <div class="outbox">
          <div class="log"><p v-for="(o, i) in output" :key="i" :class="{ note: o.note }">{{ o.t }}</p></div>
          <div class="scroll"><i class="caret upc"></i><i class="thumb low"></i><i class="caret"></i></div>
        </div>

        <div class="context" role="menu">
          <template v-for="(g, gi) in context" :key="gi">
            <hr v-if="gi">
            <button v-for="c in g" :key="c.t" role="menuitem" :class="{ hot: c.t === 'History Folder' }">
              <svg class="ic13" viewBox="0 0 16 16" v-html="art[c.icon] ?? ''"></svg><span>{{ c.t }}</span>
            </button>
          </template>
        </div>
        <svg class="cursor" viewBox="0 0 10 15"><path d="M1 1v10l2.500-2 2 5 1.800-1-2-4.500H9z" fill="#fff" stroke="#222" /></svg>
      </aside>

      <main>
        <div class="docs">
          <button class="doc first">History manager elements.Z3PRT<b>✕</b></button>
          <button class="doc current">History Manager_1.Z3PRT<b>✕</b></button>
          <button class="add" aria-label="New document">+</button>
          <button class="more" aria-label="Documents"><i class="caret lined"></i></button>
        </div>
        <section class="canvas">
          <svg class="scene" viewBox="268 160 1012 536" preserveAspectRatio="xMinYMin meet" role="img" aria-label="Bearing housing model">
            <defs>
              <linearGradient id="earL" x1="0" y1="0" x2="1" y2=".6"><stop offset="0" stop-color="#a5c3d1" /><stop offset=".3" stop-color="#b4d0dc" /><stop offset=".5" stop-color="#a4c3d0" /><stop offset=".66" stop-color="#bfdce7" /><stop offset="1" stop-color="#a3c2cf" /></linearGradient>
              <linearGradient id="earR" x1="0" y1="0" x2="1" y2=".8"><stop offset="0" stop-color="#a6c6d3" /><stop offset=".35" stop-color="#abcad7" /><stop offset=".6" stop-color="#c4e1eb" /><stop offset=".75" stop-color="#a9c9d6" /><stop offset="1" stop-color="#9fbfcc" /></linearGradient>
              <linearGradient id="rim" x1="0" y1="0" x2="1" y2="0"><stop offset="0" stop-color="#a5c3cf" /><stop offset=".3" stop-color="#8aa5b0" /><stop offset="1" stop-color="#43555e" /></linearGradient>
              <linearGradient id="wallG" x1="0" y1="0" x2="1" y2="0"><stop offset="0" stop-color="#7b5b00" /><stop offset=".3" stop-color="#6a4e00" /><stop offset="1" stop-color="#8a6600" /></linearGradient>
              <linearGradient id="domeG" x1="0" y1=".5" x2="1" y2=".35"><stop offset="0" stop-color="#d29a00" /><stop offset=".6" stop-color="#d79e00" /><stop offset=".78" stop-color="#9a7100" /><stop offset="1" stop-color="#4f3900" /></linearGradient>
              <linearGradient id="domeT" x1=".3" y1="0" x2=".45" y2="1"><stop offset="0" stop-color="#5c4300" stop-opacity=".95" /><stop offset=".22" stop-color="#9c7200" stop-opacity=".6" /><stop offset=".42" stop-color="#d79e00" stop-opacity="0" /></linearGradient>
              <linearGradient id="holeG" x1="0" y1="0" x2="1" y2="0"><stop offset="0" stop-color="#5e7581" /><stop offset=".6" stop-color="#a9c6d2" /><stop offset="1" stop-color="#7793a0" /></linearGradient>
            </defs>

            <!-- left ear -->
            <path d="M455 267C450 280 449 290 452 299L457 307 513 392 535 375 461 284z" fill="#8299a8" />
            <path d="M455 267C450 280 449 290 452 299L457 307 461 284z" fill="#94afbd" />
            <path d="M455 267C455 248 475 233 501 233L645 251 600 300 536 372 461 284Q455 275 455 267z" fill="url(#earL)" stroke="#2a3a42" stroke-width="1" />
            <path d="M462 284 457 307" stroke="#2a3a42" />
            <path d="M455 268C450 280 449 290 452 299L457 307 513 392" fill="none" stroke="#e9b22a" stroke-width="1.600" />
            <path d="M457 270Q480 250 530 261T600 280" fill="none" stroke="#d9c06a" stroke-width="1.200" opacity=".55" />
            <circle cx="496" cy="291" r="9" fill="none" stroke="#d3c37a" stroke-width="1.500" opacity=".5" />
            <ellipse cx="500" cy="271" rx="15" ry="12" fill="#b2cedb" stroke="#1c2a31" stroke-width="1" />
            <path d="M486 268Q500 255 514 269" fill="none" stroke="#3d5663" stroke-width="1" />
            <ellipse cx="499" cy="272" rx="9" ry="8" fill="url(#holeG)" stroke="#1c2a31" stroke-width="1" />

            <!-- right ear -->
            <path d="M755 514 750 553 882 582C905 586 932 583 939 552L940 527 886 558z" fill="#93b3c0" />
            <path d="M887 557 883 582C905 586 932 583 939 552L940 527Q930 562 887 557z" fill="url(#rim)" />
            <path d="M870 396 930 496Q941 514 940 528C936 552 912 566 886 558L755 514 840 430z" fill="url(#earR)" stroke="#2a3a42" />
            <path d="M887 558 882 582" stroke="#1c2a31" />
            <path d="M750 553 882 582C905 586 935 583 938 552" fill="none" stroke="#f2ae15" stroke-width="2" />
            <path d="M866 440 938 538M765 540Q800 535 835 505" fill="none" stroke="#dcc56d" stroke-width="1.200" opacity=".7" />
            <circle cx="892" cy="549" r="8" fill="none" stroke="#d9bf5e" opacity=".5" />
            <ellipse cx="896" cy="527" rx="15" ry="12" fill="#b2cedb" stroke="#1c2a31" stroke-width="1" />
            <path d="M882 524Q896 511 910 525" fill="none" stroke="#3d5663" stroke-width="1" />
            <ellipse cx="895" cy="528" rx="9" ry="7" fill="url(#holeG)" stroke="#1c2a31" stroke-width="1" />

            <!-- housing side walls -->
            <path d="M866 430C860 470 830 510 790 513L755 515 790 500z" fill="#2d2200" stroke="#f2ae15" />
            <path d="M890 373 881 415 869 394z" fill="#0e0a00" stroke="#f6b21c" stroke-width="1.500" />
            <path d="M513 394 503 440 523 452Q532 458 538 468C557 500 580 524 613 543Q645 558 682 562 700 564 706 570L725 583 747 562 756 514 733 530z" fill="url(#wallG)" stroke="#f6b21c" stroke-width="1.800" />
            <path d="M733 537 725 583 747 562 756 514z" fill="#171000" stroke="#f6b21c" stroke-width="1.500" />
            <path d="M504 433 526 445Q536 452 541 463C570 510 610 540 682 553L706 556 727 572 747 553" fill="none" stroke="#f6b21c" stroke-width="1.500" />
            <path d="M546 452C580 505 620 535 686 546M508 428l14-14 6-16M514 432l10-12 5-14M729 556l18-18M731 563l16-16" fill="none" stroke="#b5850b" stroke-width="1" />
            <path d="M530 410 547 424 538 468 523 452z" fill="#8ea9b5" stroke="#f6b21c" stroke-width="1.500" />
            <path d="M690 516 713 524 706 570 682 562z" fill="#97b4c0" stroke="#f6b21c" stroke-width="1.500" />
            <path d="M526 444 539 454M684 548l24 6" stroke="#c6b25d" />

            <!-- interior seen through the openings -->
            <path d="M600 295 640 280 690 272 765 286 725 330 655 335zM795 312 842 375 836 410 764 354z" fill="#694d00" />
            <path d="M614 302 632 298 642 303 661 284 687 301 705 303Q722 305 739 311L724 328 655 332z" fill="#fff" />
            <path d="M784 334Q817 360 833 390L835 403 823 441 775 410 766 353z" fill="#fff" />
            <path d="M607 299Q635 281 690 277 725 277 757 289" fill="none" stroke="#8fa2a0" stroke-width="5" />
            <path d="M797 316Q825 343 836 377" fill="none" stroke="#8fa9b3" stroke-width="6" />
            <path d="M610 301 635 291 643 303 661 282 687 300V281L758 292M662 282Q705 290 752 303M687 292Q715 293 744 304M784 333Q815 352 833 388M790 322Q820 348 833 375" fill="none" stroke="#e6a616" stroke-width="1.200" />
            <path d="M640 303 661 284M645 296l10-12" stroke="#171000" stroke-width="2" />
            <path d="M578 331C570 345 566 360 567 375 570 410 588 440 606 452L634 421 624 400 625 371Q605 345 578 331zM646 478C665 484 690 490 712 490 745 488 770 482 795 469Q770 452 743 447L707 459 677 454z" fill="#fff" />
            <path d="M578 331 630 358 626 373Q605 345 578 331z" fill="#a3c0cc" stroke="#26343b" stroke-width=".8" />
            <path d="M745 436 795 469Q770 452 743 448z" fill="#a3c0cc" stroke="#26343b" stroke-width=".8" />
            <path d="M677 441 647 477Q660 460 678 455z" fill="#3d4a50" />
            <path d="M797 317 764 354 770 344z" fill="#20292e" stroke="#20292e" stroke-width="3" />

            <!-- hub base -->
            <path d="M624 385C622 420 650 459 700 459 722 459 736 454 745 447V430L640 400z" fill="#84a0ac" stroke="#f2ae15" stroke-width="1.500" />

            <!-- top face of the ring with four openings -->
            <path fill-rule="evenodd" fill="#d9a000" stroke="#f8b41e" stroke-width="1.600" d="M668 229 699 247C770 255 830 300 848 331 852 345 858 350 866 356L890 373 870 395C872 450 830 510 756 514L733 537 713 525Q705 517 690 516C630 508 575 475 555 438Q547 418 535 413L513 394 533 373C535 330 570 275 645 252z
              M607 299 655 331Q675 322 700 322 714 322 725 327L758 289C715 270 645 270 607 299z
              M578 331C570 345 566 360 567 375 570 410 588 440 606 452L640 417Q625 403 624 383 624 368 629 358z
              M797 316 764 353Q780 370 776 400L775 410 823 440C837 415 838 395 836 377 832 355 815 332 797 316z
              M646 478C690 492 745 490 795 469L745 437Q725 445 700 445 688 445 677 442z" />
            <path d="M648 262Q700 250 760 276T848 350M555 400Q575 450 625 480T730 503M842 360q24 30 6 70M548 330q20-50 80-68M770 280l60 60M652 243l28 30M850 350l-15 40 20 18" fill="none" stroke="#eab52f" stroke-width="1" opacity=".4" />

            <!-- dome -->
            <ellipse cx="700" cy="383" rx="76" ry="61" fill="url(#domeG)" stroke="#f8b41e" stroke-width="1.500" />
            <ellipse cx="700" cy="383" rx="75" ry="60" fill="url(#domeT)" />
            <ellipse cx="700" cy="383" rx="76" ry="61" fill="none" stroke="#4f3900" stroke-width=".6" stroke-dasharray="1 5" />
            <path d="M677 441 606 452 640 417z" fill="#d9a000" />
            <path d="M634 420 641 416 679 440 674 447z" fill="#d9a000" />
            <path d="M745 437 752 430 776 409" fill="none" stroke="#f8b41e" stroke-width="1.500" />
            <ellipse cx="707" cy="356" rx="38" ry="31" fill="#d9a000" stroke="#f8b41e" stroke-width="1.500" />
            <path d="M669 361C675 382 690 387 707 387S742 378 745 358" fill="none" stroke="#5b4300" stroke-width=".6" stroke-dasharray="1 4" />
            <ellipse cx="707" cy="356" rx="14" ry="12" fill="url(#holeG)" stroke="#f8c244" stroke-width="1.500" />
            <g stroke="#f0ad17" stroke-width="1">
              <path d="M653 416C655 402 664 390 680 388 687 393 683 412 676 420 670 431 656 431 653 420z" fill="#9bb8c4" />
              <path d="M740 388C744 381 752 382 758 392L766 408C765 418 760 424 756 424 746 420 739 403 740 388z" fill="#9bb8c4" />
              <path d="M638 348C645 335 662 330 671 333 668 345 652 352 640 351z" fill="#b7ced6" />
              <path d="M733 334Q745 334 751 343 740 346 733 334z" fill="#a5b79a" />
            </g>
            <g fill="none" stroke="#26343b" stroke-width="1">
              <path d="M654 410Q668 402 681 413M678 390 677 407M644 350Q652 340 660 346M661 345l2-9M741 403Q752 400 765 412M760 396v9" />
              <ellipse cx="667" cy="419" rx="9" ry="8" fill="#8caab7" />
              <ellipse cx="752" cy="415" rx="7" ry="7" fill="#8caab7" />
              <path d="M646 351Q652 343 659 349" stroke-width="1.500" />
            </g>
            <path d="M708 355C725 366 745 370 751 392L762 422" fill="none" stroke="#efb02a" stroke-width="1.800" />
            <circle cx="649" cy="366" r="7" fill="none" stroke="#dfa91e" />
            <path d="M697 400 701 387 711 368" stroke="#c87612" stroke-width="3" fill="none" opacity=".75" />
            <circle cx="698" cy="396" r="4" fill="#a66a0b" opacity=".8" />
            <path d="M703 387 724 398" stroke="#91a51f" stroke-width="3" opacity=".7" />

            <!-- screw holes and reference line -->
            <g fill="#a9bfc4" stroke="#8b6700" stroke-width=".8">
              <ellipse cx="674" cy="255" rx="6" ry="5" /><ellipse cx="545" cy="392" rx="6" ry="5" /><ellipse cx="857" cy="374" rx="6" ry="5" /><ellipse cx="728" cy="512" rx="6" ry="5" />
            </g>
            <path d="M669 257q5 5 10 0zM852 376q5 5 10 0z" fill="#ae7f00" />
            <ellipse cx="545" cy="394" rx="4" ry="3" fill="#fff" /><ellipse cx="728" cy="514" rx="4" ry="3" fill="#fff" />
            <path d="M546 393 728 511" stroke="#111" stroke-width="1.500" />

            <path d="M898 526 930 494" stroke="#7a868c" />
            <path d="m926 497 6-10 1 3-3 6z" fill="#333" />
            <text x="916" y="497" class="dim-a">1.00</text>
            <text x="924" y="511" class="dim-b">⌀6</text>

            <!-- axis triad -->
            <path d="M307 658 319 645" stroke="#c3141b" stroke-width="4" /><path d="m325 639-9 4 5 5z" fill="#d4181f" />
            <path d="M307 658 326 670" stroke="#3ee03e" stroke-width="4" /><path d="m332 675-10-1 4-7z" fill="#2bb92b" />
            <path d="M307 659 304 670" stroke="#161699" stroke-width="4" /><circle cx="304" cy="671" r="4" fill="#1a1ab8" /><path d="m300 673 7 1-4 4z" fill="#1a1ab8" />
            <text x="324" y="640" class="ax axx">X</text><text x="333" y="682" class="ax axy">Y</text><text x="299" y="687" class="ax axz">Z</text>
            <text x="272" y="692" class="size">176.344 mm</text>
          </svg>
          <div class="overlay">
            <p>&lt;right-click&gt; for context-sensitive options.<br>&lt;Shift-right-click&gt; to display pick filter.</p>
            <div class="viewbar">
              <button v-for="(v, i) in viewTools" :key="i" :aria-label="v.icon" :style="{ width: v.w + 'px' }"><svg class="ic14" viewBox="0 0 16 16" v-html="art[v.icon]"></svg><i v-if="v.arrow" class="caret"></i></button>
              <span class="combo layers"><svg class="ic11" viewBox="0 0 16 16" v-html="art.bulb"></svg><svg class="ic11" viewBox="0 0 16 16" v-html="art.dotY"></svg><select aria-label="Layer"><option>Layer000</option></select></span>
            </div>
          </div>
        </section>
      </main>
    </div>

    <footer class="status">
      <span>Select command or entity.</span>
      <i class="vsep"></i>
      <button class="lit" aria-label="Text panel"><svg class="ic13" viewBox="0 0 16 16" v-html="art.statT"></svg></button>
      <button aria-label="Screen"><svg class="ic13" viewBox="0 0 16 16" v-html="art.statScreen"></svg></button>
      <button class="lit" aria-label="Output panel"><svg class="ic13" viewBox="0 0 16 16" v-html="art.statList"></svg></button>
      <input type="text" aria-label="Command">
    </footer>
  </div>
</template>

<style>
body { margin: 0; background: #e1e5e6; }
</style>

<style scoped>
.app { height: 100vh; display: flex; flex-direction: column; background: #e1e5e6; color: #333; font: 10px/14px "Open Sans", "Noto Sans", sans-serif; overflow: hidden; }
.defs { width: 0; height: 0; position: absolute; }
button, input, select { font: inherit; color: inherit; margin: 0; padding: 0; border: 0; background: none; border-radius: 0; box-sizing: border-box; }
button { display: flex; align-items: center; justify-content: center; white-space: nowrap; }
h1, h2, p, ul { margin: 0; padding: 0; font-size: inherit; font-weight: 400; }
svg { display: block; flex: none; }
.ic11 { width: 11px; height: 11px; } .ic13 { width: 13px; height: 13px; } .ic14 { width: 14px; height: 14px; } .ic15 { width: 15px; height: 15px; }
.ic18 { width: 18px; height: 18px; } .ic20 { width: 20px; height: 20px; } .ic26 { width: 26px; height: 26px; }
.caret { width: 0; height: 0; flex: none; border: 2px solid transparent; border-top: 3px solid #444; border-bottom: 0; box-sizing: content-box; padding-left: 1px; background-clip: padding-box; }
.caret { width: 5px; height: 3px; border: 0; padding: 0; background: #444; clip-path: polygon(0 0, 100% 0, 50% 100%); }
.caret.upc { width: 7px; height: 4px; clip-path: polygon(0 100%, 100% 100%, 50% 0); }
.caret.big { width: 8px; height: 7px; }
.caret.lined { width: 7px; height: 6px; clip-path: polygon(0 0, 100% 0, 100% 15%, 0 15%, 0 40%, 100% 40%, 50% 100%, 0 40%); }
.vsep { width: 1px; height: 15px; flex: none; background: #c3c8ca; }

.title { display: flex; align-items: center; height: 22px; flex: none; }
.quick { display: flex; align-items: center; width: 180px; padding-left: 3px; box-sizing: border-box; }
.quick .vsep { margin: 0 4px 0 1px; }
.quick button { width: 19px; height: 20px; }
.quick .tiny { width: 12px; }
.menubar { display: flex; }
.menubar button { color: #222; height: 20px; }
.title h1 { margin-left: auto; color: #444; }
.winbtns { display: flex; margin-left: 189px; padding-right: 2px; }
.winbtns button { width: 20px; height: 18px; }

.tabs { display: flex; height: 18px; flex: none; padding-left: 1px; border-bottom: 1px solid #cdd3d6; box-sizing: border-box; }
.tabs > button { flex: none; color: #555; height: 18px; border: 1px solid transparent; border-bottom: 0; padding-bottom: 2px; }
.tabs > .file { background: #2459ae; color: #fff; height: 17px; }
.tabs > .on { background: #fcfdfd; border-color: #cdd3d6; }
.tabtools { display: flex; align-items: center; margin-left: auto; }
.tabtools > button { width: 24px; height: 16px; }
.find { display: flex; align-items: center; width: 120px; height: 17px; border: 1px solid #c5cacd; background: #fff; box-sizing: border-box; margin: 0 2px; padding-right: 3px; }
.find input { flex: 1; min-width: 0; padding-left: 1px; outline: 0; }
.find input::placeholder { color: #777; opacity: 1; }
.tabtools .help { gap: 5px; width: 29px; }
.help b { width: 12px; height: 12px; border-radius: 50%; background: #2b55b0; color: #fff; line-height: 12px; text-align: center; }
.tabtools .mdi { width: 14px; }

.ribbon { display: flex; flex: none; height: 78px; background: #fcfdfd; border-bottom: 1px solid #cdd3d6; box-sizing: border-box; }
.group { flex: none; display: flex; flex-direction: column; align-items: center; box-sizing: border-box; border-right: 1px solid #dfe2e4; margin-bottom: 2px; }
.tools { display: flex; height: 62px; }
.tools button { flex-direction: column; justify-content: flex-start; align-items: center; padding-top: 5px; height: 62px; }
.tools span { height: 14px; display: flex; align-items: center; }
.tools .second { gap: 4px; }
.tools .far { gap: 12px; }
.caption { align-self: stretch; display: grid; align-items: center; }
.caption h2 { grid-area: 1 / 1; color: #7c8286; text-align: center; }
.caption button { grid-area: 1 / 1; justify-self: end; margin-right: 4px; width: 9px; height: 12px; }
.caption svg { width: 7px; height: 7px; }

.bar { display: flex; align-items: center; flex: none; height: 25px; padding-left: 2px; }
.bar button { height: 17px; width: 19px; }
.lead { display: flex; align-items: center; width: 133px; }
.grip { width: 2px; height: 14px; margin-right: 4px; background: repeating-linear-gradient(#98a0a4 0 1px, transparent 1px 3px); flex: none; }
.lead > .vsep { margin: 0 2px; }
.bar .lit, .status .lit { background: #ffe380; border: 1px solid #d9ae3e; }
.bar .lit { width: 18px; flex: none; }
.spread { display: flex; }
.spread button { flex: 1; }
.pair { width: 40px; } .nine { width: 170px; } .three { width: 57px; } .many { width: 262px; }
.pair { margin: 0 1px; }
.combo { display: grid; align-items: center; border: 1px solid #c3c9cc; background: #fff; box-sizing: border-box; height: 17px; }
.combo select { grid-area: 1 / 1; appearance: none; width: 100%; height: 15px; line-height: 14px; padding-left: 2px; color: #222; outline: 0; }
.combo::after { content: ""; grid-area: 1 / 1; justify-self: end; margin-right: 3px; width: 5px; height: 3px; background: #444; clip-path: polygon(0 0, 100% 0, 50% 100%); pointer-events: none; }
.all { width: 81px; margin-right: 1px; } .single { width: 80px; }
.part { width: 110px; background: #e8ebec; border-color: #e0e3e4; }
.part select { color: #888; opacity: 1; }
.part::after { background: #aaa; }

.work { flex: 1; display: flex; min-height: 0; }
.left { position: relative; width: 267px; flex: none; display: flex; flex-direction: column; min-height: 0; }
.phead { display: flex; align-items: center; height: 17px; padding: 0 3px; flex: none; }
.phead h2 { flex: 1; color: #444; }
.phead button { width: 16px; height: 14px; }
.manager { flex: 1; display: flex; min-height: 0; }
.side { width: 28px; display: flex; flex-direction: column; align-items: flex-end; flex: none; }
.side button { width: 27px; height: 39px; }
.side .on { background: #fcfdfd; }
.panel { flex: 1; min-width: 0; min-height: 0; display: flex; flex-direction: column; border: 1px solid #c9ced1; border-width: 0 1px 1px; margin-bottom: 1px; }
.filters { display: flex; gap: 1px; height: 22px; flex: none; align-items: center; }
.filters .combo { width: 107px; height: 20px; }
.filters input { flex: 1; min-width: 0; height: 20px; border: 1px solid #c3c9cc; background: #fff; }
.filters button { width: 18px; height: 20px; background: #fff; border: 1px solid #c3c9cc; }
.treebox { flex: 1; display: flex; min-height: 0; background: #fff; }
.treemain { flex: 1; display: flex; flex-direction: column; min-width: 0; }
.thead { display: flex; height: 21px; flex: none; background: #eef0f5; border-bottom: 1px solid #c9d0d6; box-sizing: border-box; align-items: center; }
.thead span { flex: 1; padding-left: 3px; line-height: 20px; border-right: 1px solid #cdd2d6; box-sizing: border-box; height: 20px; }
.thead span + span { flex: 0 0 30px; }
.clip { flex: 1; overflow: hidden; min-height: 0; background: linear-gradient(90deg, transparent calc(100% - 31px), #d9dcde 0, #d9dcde calc(100% - 30px), transparent 0), #fff; }
.tree { list-style: none; display: grid; grid-template-rows: repeat(22, 1fr); height: 337px; }
.tree li { display: flex; align-items: center; gap: 2px; white-space: nowrap; min-height: 0; }
.tree li:nth-child(even) { background: rgba(0, 0, 0, .035); }
.tree span { color: #222; }
.lv1 { padding-left: 12px; }
.lv2 { padding-left: 36px; }
.chev { width: 10px; height: 10px; margin: 0 2px 0 0; }
.tree label { display: flex; align-items: center; gap: 2px; padding: 0 7px 0 1px; height: 100%; box-sizing: border-box; border: 1px solid transparent; }
.tree label.picked { background: #ffe08a; border-color: #d49a35; }
.tree label.dim span { color: #999; }
.tree input { appearance: none; width: 12px; height: 12px; border: 1px solid #444; background: #fff; display: grid; place-items: center; flex: none; }
.tree input:checked::after { content: ""; width: 3px; height: 6px; border: solid #18922c; border-width: 0 2px 2px 0; transform: rotate(40deg); margin-bottom: 2px; }
.tree input.red:checked::after { border-color: #d2232a; }
.scroll { width: 14px; flex: none; display: flex; flex-direction: column; align-items: center; background: #e3e7ee; padding: 5px 0 4px; box-sizing: border-box; }
.thumb { width: 12px; height: 200px; margin: 4px 0 auto; box-sizing: border-box; border: 1px solid #aeb7c6; background: linear-gradient(#a3acb8, #a3acb8) center / 5px 5px no-repeat, #f0f3f8; }
.thumb.low { height: 14px; margin: auto 0 4px; }
.replay { display: flex; align-items: center; gap: 5px; height: 19px; flex: none; padding-left: 2px; font-weight: 700; color: #222; background: #fcfdfd; border: solid #c9ced1; border-width: 1px 0; box-sizing: border-box; }
.steps { height: 62px; padding: 4px 0 0 30px; box-sizing: border-box; flex: none; }
.steps > div { display: flex; gap: 2px; margin-bottom: 2px; }
.steps .lower { padding-left: 14px; }
.steps button { width: 27px; height: 25px; border: 1px solid #cfd3d5; background: #e9ebec; }
.steps .white { background: #fff; }
.out { height: 23px; }
.stop { width: 7px; height: 7px; background: #111; }
.outbox { height: 56px; flex: none; display: flex; background: #fff; border: solid #c9ced1; border-width: 1px 1px 1px 0; box-sizing: border-box; }
.log { flex: 1; padding-left: 4px; min-width: 0; line-height: 13px; padding-top: 1px; white-space: nowrap; overflow: hidden; color: #222; }
.log .note { color: #1b7d1b; }

.context { position: absolute; left: 126px; top: 234px; width: 131px; height: 238px; box-sizing: border-box; padding: 1px; display: flex; flex-direction: column; border: 1px solid #b9bec1; background: linear-gradient(90deg, #f1f2f3 20px, #fdfdfd 20px); box-shadow: 2px 2px 2px rgba(0, 0, 0, .45); z-index: 2; }
.context button { flex: 1; justify-content: flex-start; gap: 6px; padding-left: 4px; color: #555; min-height: 0; }
.context .hot { background: #ffe999; outline: 1px solid #ecd06f; outline-offset: -1px; }
.context hr { margin: 2px 3px 3px 21px; border: 0; height: 1px; background: #c8c8c8; width: auto; flex: none; }
.cursor { position: absolute; left: 168px; top: 298px; width: 10px; height: 15px; z-index: 3; }

main { flex: 1; min-width: 0; min-height: 0; display: flex; flex-direction: column; border-left: 1px solid #c3c9cc; }
.docs { display: flex; height: 17px; flex: none; align-items: stretch; }
.doc { color: #222; gap: 6px; justify-content: flex-end; }
.doc b { font: 700 9px/10px "DejaVu Sans", sans-serif; color: #75683a; }
.first { width: 187px; }
.current { width: 150px; margin-left: 13px; padding-right: 1px; background: #fcfdfd; border: 1px solid #c9ced1; border-bottom: 0; }
.add { width: 44px; color: #888; font-size: 16px; }
.more { width: 18px; margin-left: auto; }
.canvas { flex: 1; position: relative; background: #fff; min-height: 0; overflow: hidden; }
.scene { position: absolute; inset: 0; width: 100%; height: 100%; }
.overlay { position: relative; display: flex; padding: 1px 0 0 15px; align-items: flex-start; color: #222; }
.overlay p { width: 268px; padding-top: 2px; line-height: 14px; white-space: nowrap; flex: none; }
.viewbar { display: flex; align-items: center; height: 18px; }
.viewbar button { height: 18px; justify-content: flex-start; gap: 4px; padding-left: 2px; }
.layers { width: 97px; height: 19px; margin-left: 4px; grid-template-columns: 13px 12px 1fr; padding-left: 4px; }
.layers select, .layers::after { grid-area: 1 / 3; }
.dim-a { font: 13px "Open Sans", sans-serif; fill: #444; }
.dim-b { font: 10px "DejaVu Sans", sans-serif; fill: #a5abae; }
.ax { font: 12px "Open Sans", sans-serif; }
.axx { fill: #d5222a; } .axy { fill: #35d835; } .axz { fill: #3333b5; }
.size { font: 14px "Open Sans", sans-serif; fill: #111; }

.status { display: flex; align-items: center; height: 24px; flex: none; border-top: 1px solid #c9ced1; box-sizing: border-box; padding: 0 2px 0 4px; }
.status span { flex: 1; color: #444; }
.status .vsep { margin-right: 11px; }
.status button { width: 18px; height: 18px; margin-right: 6px; }
.status input { width: 291px; height: 19px; border: 1px solid #c9ced1; background: #fff; }
</style>
